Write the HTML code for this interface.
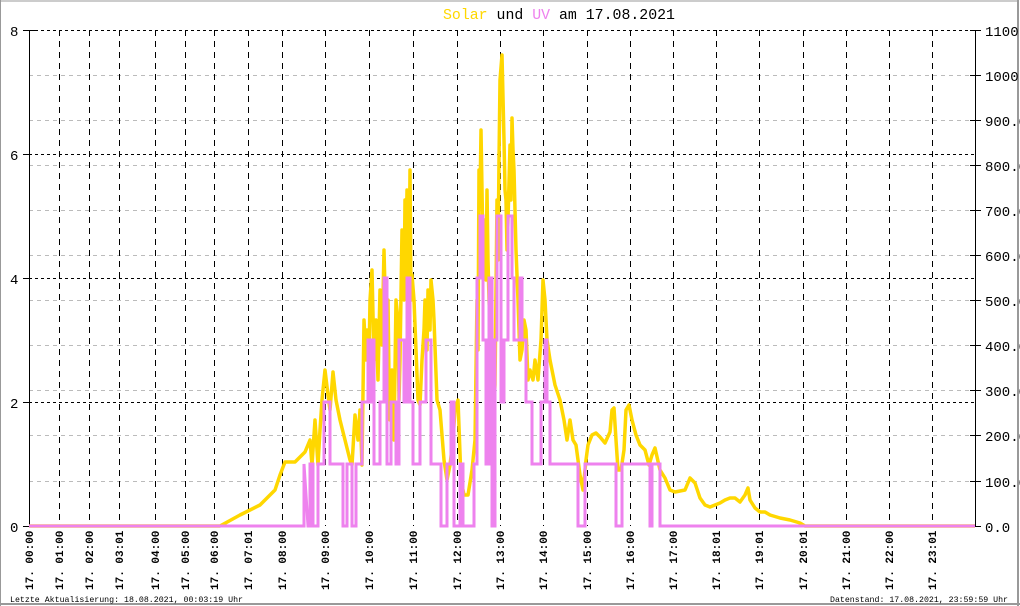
<!DOCTYPE html>
<html><head><meta charset="utf-8"><style>
html,body{margin:0;padding:0;background:#fff;}
svg{display:block;}
text{font-family:"Liberation Mono",monospace;}
</style></head><body>
<svg width="1020" height="606" viewBox="0 0 1020 606" xmlns="http://www.w3.org/2000/svg">
<rect x="0" y="0" width="1020" height="606" fill="#fff"/>
<rect x="0.5" y="0.5" width="1018" height="1" fill="#999"/>
<rect x="0" y="0" width="1" height="606" fill="#999"/>
<rect x="1017" y="0" width="2" height="606" fill="#999"/>
<rect x="0" y="603" width="1020" height="2" fill="#999"/>
<text x="443" y="19" font-size="14.8" textLength="232" lengthAdjust="spacingAndGlyphs"><tspan fill="#FFD700">Solar</tspan> und <tspan fill="#EE82EE">UV</tspan> am 17.08.2021</text>
<g stroke="#bbb" stroke-width="1" stroke-dasharray="4,4">
<line x1="29" y1="75.5" x2="975" y2="75.5"/><line x1="29" y1="120.5" x2="975" y2="120.5"/><line x1="29" y1="165.5" x2="975" y2="165.5"/><line x1="29" y1="210.5" x2="975" y2="210.5"/><line x1="29" y1="255.5" x2="975" y2="255.5"/><line x1="29" y1="300.5" x2="975" y2="300.5"/><line x1="29" y1="345.5" x2="975" y2="345.5"/><line x1="29" y1="390.5" x2="975" y2="390.5"/><line x1="29" y1="435.5" x2="975" y2="435.5"/><line x1="29" y1="481.5" x2="975" y2="481.5"/>
</g>
<g stroke="#000" stroke-width="1" stroke-dasharray="3,3">
<line x1="29" y1="30.5" x2="975" y2="30.5"/><line x1="29" y1="154.5" x2="975" y2="154.5"/><line x1="29" y1="278.5" x2="975" y2="278.5"/><line x1="29" y1="402.5" x2="975" y2="402.5"/>
</g>
<g stroke="#000" stroke-width="1" stroke-dasharray="6,5">
<line x1="59.5" y1="30" x2="59.5" y2="526"/><line x1="89.5" y1="30" x2="89.5" y2="526"/><line x1="119.5" y1="30" x2="119.5" y2="526"/><line x1="155.5" y1="30" x2="155.5" y2="526"/><line x1="185.5" y1="30" x2="185.5" y2="526"/><line x1="214.5" y1="30" x2="214.5" y2="526"/><line x1="248.5" y1="30" x2="248.5" y2="526"/><line x1="282.5" y1="30" x2="282.5" y2="526"/><line x1="325.5" y1="30" x2="325.5" y2="526"/><line x1="369.5" y1="30" x2="369.5" y2="526"/><line x1="413.5" y1="30" x2="413.5" y2="526"/><line x1="457.5" y1="30" x2="457.5" y2="526"/><line x1="500.5" y1="30" x2="500.5" y2="526"/><line x1="543.5" y1="30" x2="543.5" y2="526"/><line x1="587.5" y1="30" x2="587.5" y2="526"/><line x1="630.5" y1="30" x2="630.5" y2="526"/><line x1="673.5" y1="30" x2="673.5" y2="526"/><line x1="716.5" y1="30" x2="716.5" y2="526"/><line x1="759.5" y1="30" x2="759.5" y2="526"/><line x1="803.5" y1="30" x2="803.5" y2="526"/><line x1="846.5" y1="30" x2="846.5" y2="526"/><line x1="889.5" y1="30" x2="889.5" y2="526"/><line x1="932.5" y1="30" x2="932.5" y2="526"/>
</g>
<g stroke="#000" stroke-width="1">
<line x1="29.5" y1="30" x2="29.5" y2="527"/><line x1="975.5" y1="30" x2="975.5" y2="527"/>
<line x1="23" y1="30.5" x2="35" y2="30.5"/><line x1="23" y1="154.5" x2="29" y2="154.5"/><line x1="23" y1="278.5" x2="29" y2="278.5"/><line x1="23" y1="402.5" x2="29" y2="402.5"/><line x1="23" y1="526.5" x2="29" y2="526.5"/>
<line x1="970" y1="30.5" x2="981" y2="30.5"/><line x1="970" y1="75.5" x2="981" y2="75.5"/><line x1="970" y1="120.5" x2="981" y2="120.5"/><line x1="970" y1="165.5" x2="981" y2="165.5"/><line x1="970" y1="210.5" x2="981" y2="210.5"/><line x1="970" y1="255.5" x2="981" y2="255.5"/><line x1="970" y1="300.5" x2="981" y2="300.5"/><line x1="970" y1="345.5" x2="981" y2="345.5"/><line x1="970" y1="390.5" x2="981" y2="390.5"/><line x1="970" y1="435.5" x2="981" y2="435.5"/><line x1="970" y1="481.5" x2="981" y2="481.5"/><line x1="970" y1="526.5" x2="981" y2="526.5"/>
</g>
<g font-size="14" fill="#000" style="font-family:'Liberation Sans',sans-serif">
<text x="10" y="36">8</text><text x="10" y="160">6</text><text x="10" y="284">4</text><text x="10" y="408">2</text><text x="10" y="532">0</text>
<text x="985" y="36">1100</text><text x="985" y="81">1000</text><text x="985" y="126">900.0</text><text x="985" y="171">800.0</text><text x="985" y="216">700.0</text><text x="985" y="261">600.0</text><text x="985" y="306">500.0</text><text x="985" y="351">400.0</text><text x="985" y="396">300.0</text><text x="985" y="441">200.0</text><text x="985" y="487">100.0</text><text x="985" y="532">0.0</text>
</g>
<polyline fill="none" stroke="#FFD700" stroke-width="3.5" stroke-linejoin="round" points="29,526 220,526 240,515 260,505 275,490 280,475 285,462 295,462 305,452 310,440 312,465 315,420 318,465 320,430 322,400 325,370 328,395 330,410 333,372 336,400 340,420 345,440 350,460 352,465 355,415 358,440 360,410 362,465 364,320 366,360 367,330 369,360 370,300 372,270 374,360 376,320 378,380 380,290 382,345 384,250 386,330 388,300 389,380 390,420 392,370 394,440 396,300 398,320 399,400 400,360 402,230 404,300 405,200 406,260 407,190 408,400 410,170 411,300 412,275 414,300 416,350 418,400 420,405 422,360 424,330 425,300 427,350 428,290 430,330 431,280 433,300 434,320 437,400 440,410 444,460 447,480 450,465 453,440 455,410 458,400 461,480 464,495 468,495 472,470 475,440 477,300 478,350 479,170 480,200 481,130 483,250 485,220 486,280 487,190 488,260 489,300 491,350 493,420 495,385 497,200 498,260 499,160 500,80 502,55 504,140 505,190 506,200 507,250 508,220 510,145 511,200 512,118 513,150 514,170 516,250 518,300 520,360 522,350 524,320 526,330 528,380 530,370 533,380 535,360 538,380 541,340 543,280 545,300 547,340 550,360 555,385 560,400 564,420 567,440 570,420 573,440 576,445 580,475 583,490 586,460 588,445 592,435 596,433 600,437 605,443 610,432 612,410 614,408 616,440 618,470 621,470 624,450 626,410 629,405 632,420 636,435 640,445 645,450 649,465 652,455 655,448 660,470 665,478 670,490 675,492 685,490 690,478 695,483 700,498 705,505 710,507 715,505 720,503 725,500 730,498 735,498 740,502 745,495 748,488 750,500 755,508 760,512 765,512 770,515 780,518 790,520 800,523 805,526 975,526"/>
<polyline fill="none" stroke="#EE82EE" stroke-width="3" points="29,526 304,526 304,464 308,526 310,526 310,464 313,464 313,526 318,526 318,464 324,464 324,402 330,402 330,464 343,464 343,526 347,526 347,464 352,464 352,526 356,526 356,464 362,464 362,402 368,402 368,340 370,340 370,402 372,402 372,340 374,340 374,464 380,464 380,402 384,402 384,278 387,278 387,464 391,464 391,402 396,402 396,464 399,464 399,340 404,340 404,402 407,402 407,278 410,278 410,402 413,402 413,464 420,464 420,402 426,402 426,340 431,340 431,464 441,464 441,526 447,526 447,464 451,464 451,402 454,402 454,526 460,526 460,464 463,464 463,526 474,526 474,464 477,464 477,278 480,278 480,216 483,216 483,340 486,340 486,464 489,464 489,278 492,278 492,526 495,526 495,340 497,340 497,216 501,216 501,402 504,402 504,340 508,340 508,216 512,216 512,278 514,278 514,340 520,340 520,278 522,278 522,340 526,340 526,402 532,402 532,464 541,464 541,402 545,402 545,340 547,340 547,402 550,402 550,464 578,464 578,526 585,526 585,464 616,464 616,526 622,526 622,464 650,464 650,526 652,526 652,464 660,464 660,526 975,526"/>
<g font-size="11" fill="#000" font-weight="bold">
<text transform="translate(33,590) rotate(-90)">17. 00:00</text>
<text transform="translate(63,590) rotate(-90)">17. 01:00</text>
<text transform="translate(93,590) rotate(-90)">17. 02:00</text>
<text transform="translate(123,590) rotate(-90)">17. 03:01</text>
<text transform="translate(159,590) rotate(-90)">17. 04:00</text>
<text transform="translate(189,590) rotate(-90)">17. 05:00</text>
<text transform="translate(218,590) rotate(-90)">17. 06:00</text>
<text transform="translate(252,590) rotate(-90)">17. 07:01</text>
<text transform="translate(286,590) rotate(-90)">17. 08:00</text>
<text transform="translate(329,590) rotate(-90)">17. 09:00</text>
<text transform="translate(373,590) rotate(-90)">17. 10:00</text>
<text transform="translate(417,590) rotate(-90)">17. 11:00</text>
<text transform="translate(461,590) rotate(-90)">17. 12:00</text>
<text transform="translate(504,590) rotate(-90)">17. 13:00</text>
<text transform="translate(547,590) rotate(-90)">17. 14:00</text>
<text transform="translate(591,590) rotate(-90)">17. 15:00</text>
<text transform="translate(634,590) rotate(-90)">17. 16:00</text>
<text transform="translate(677,590) rotate(-90)">17. 17:00</text>
<text transform="translate(720,590) rotate(-90)">17. 18:01</text>
<text transform="translate(763,590) rotate(-90)">17. 19:01</text>
<text transform="translate(807,590) rotate(-90)">17. 20:01</text>
<text transform="translate(850,590) rotate(-90)">17. 21:00</text>
<text transform="translate(893,590) rotate(-90)">17. 22:00</text>
<text transform="translate(936,590) rotate(-90)">17. 23:01</text>
</g>
<text x="10" y="602" font-size="8.2" textLength="233" lengthAdjust="spacingAndGlyphs" fill="#000">Letzte Aktualisierung: 18.08.2021, 00:03:19 Uhr</text>
<text x="830" y="602" font-size="8.2" textLength="178" lengthAdjust="spacingAndGlyphs" fill="#000">Datenstand: 17.08.2021, 23:59:59 Uhr</text>
</svg>
</body></html>
